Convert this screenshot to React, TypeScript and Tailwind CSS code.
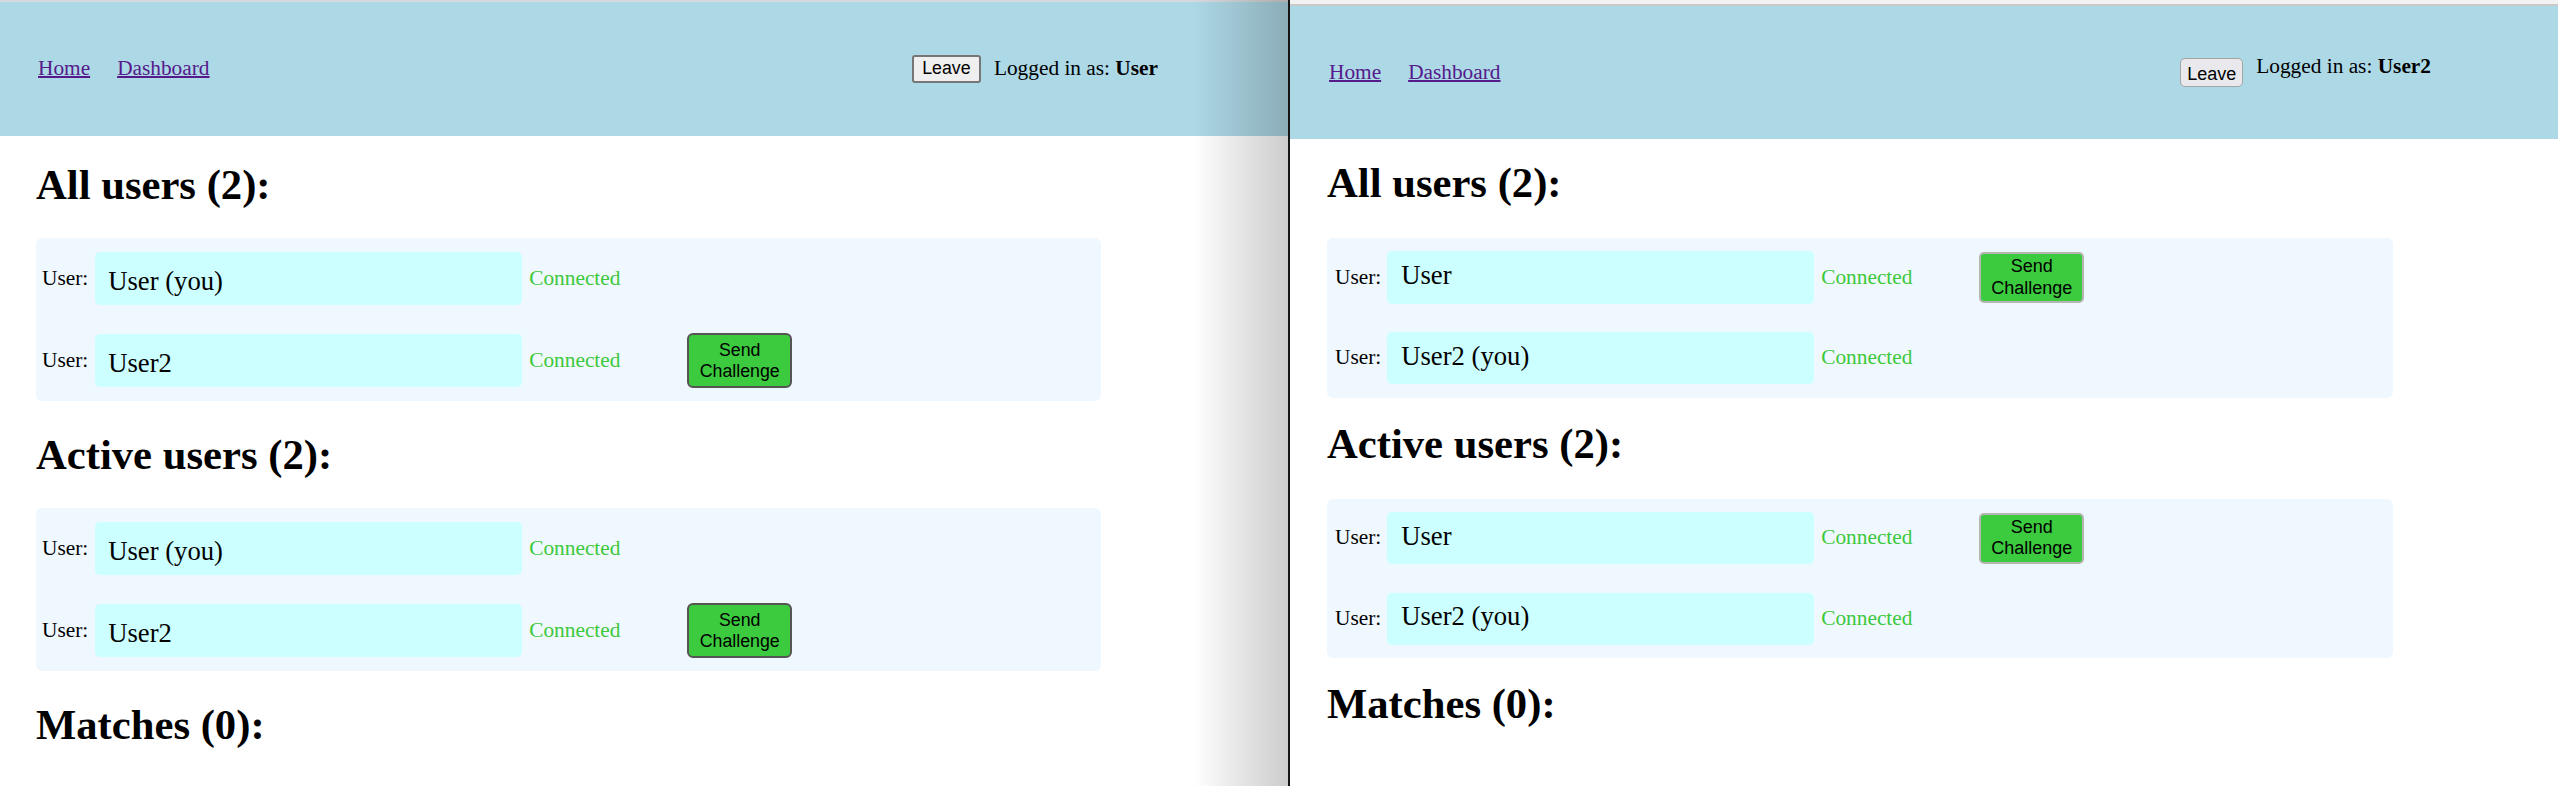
import React from 'react';

type Member = { name: string; you: boolean };

const firstView: Member[] = [
  { name: 'User', you: true },
  { name: 'User2', you: false },
];
const secondView: Member[] = [
  { name: 'User', you: false },
  { name: 'User2', you: true },
];

function UserRow({ member, alt }: { member: Member; alt: boolean }) {
  return (
    <div className={alt ? 'flex items-center h-[53px] pl-[8px]' : 'flex items-center h-[55px] pl-[6px]'}>
      <span className={alt ? 'mr-[6px]' : 'mr-[7px]'}>User:</span>
      <div
        className={
          alt
            ? 'w-[427px] h-[52.5px] rounded-[5px] bg-[#ccffff] pl-[14px] pb-[5px] flex items-center text-[26.67px]'
            : 'w-[427px] h-[53.5px] rounded-[5px] bg-[#ccffff] pl-[13px] pt-[5px] flex items-center text-[26.67px]'
        }
      >
        {member.name}
        {member.you ? ' (you)' : ''}
      </div>
      <span className="ml-[7px] w-[158px] text-[#3cc83c]">Connected</span>
      {!member.you && (
        <button
          className={
            alt
              ? "w-[105px] h-[51px] border-2 border-[#b5b5b5] rounded-[5px] bg-[#3ccb3e] font-['Liberation_Sans',Arial,sans-serif] text-[18px] leading-[21.6px] text-black"
              : "w-[105px] h-[55px] border-2 border-[#555555] rounded-[6px] bg-[#3ccb3e] font-['Liberation_Sans',Arial,sans-serif] text-[17.78px] leading-[20.4px] text-black"
          }
        >
          Send
          <br />
          Challenge
        </button>
      )}
    </div>
  );
}

function UserList({ title, members, alt, first }: { title: string; members: Member[]; alt: boolean; first?: boolean }) {
  const headingClass = alt
    ? first
      ? 'text-[42.67px] leading-[49px] font-bold mt-[19px] mb-[31px]'
      : 'text-[42.67px] leading-[49px] font-bold mt-[21px] mb-[31px]'
    : first
      ? 'text-[42.67px] leading-[49px] font-bold mt-[24px] mb-[29px]'
      : 'text-[42.67px] leading-[49px] font-bold mt-[29px] mb-[29px]';
  return (
    <section>
      <h1 className={headingClass}>{title}</h1>
      <div
        className={
          alt
            ? 'w-[1066px] rounded-[6px] bg-[#f0f8ff] py-[13px] flex flex-col gap-[27.7px]'
            : 'w-[1065px] rounded-[6px] bg-[#f0f8ff] py-[13px] flex flex-col gap-[27px]'
        }
      >
        {members.map((m) => (
          <UserRow key={m.name} member={m} alt={alt} />
        ))}
      </div>
    </section>
  );
}

function BrowserView({ me, members, alt }: { me: string; members: Member[]; alt: boolean }) {
  return (
    <div className={alt ? 'relative w-[1268px] h-[786px] bg-white overflow-hidden' : 'relative w-[1288px] h-[786px] bg-white overflow-hidden'}>
      {alt ? (
        <>
          <div className="h-[4px] bg-[#f2f2f2]" />
          <div className="h-[2px] bg-[#c9c9c9]" />
        </>
      ) : (
        <div className="h-[2px] bg-[#d6d9db]" />
      )}
      <header
        className={
          alt
            ? 'h-[133px] bg-[#add8e6] flex items-center justify-between pl-[39px] pr-[127px]'
            : 'h-[134px] bg-[#add8e6] flex items-center justify-between pl-[38px] pr-[130px]'
        }
      >
        <nav className="flex gap-[27px]">
          <a href="#" className="text-[#551a8b] underline decoration-[2px]">Home</a>
          <a href="#" className="text-[#551a8b] underline decoration-[2px]">Dashboard</a>
        </nav>
        <div className={alt ? 'flex items-start gap-[13px]' : 'flex items-center gap-[13px]'}>
          <button
            className={
              alt
                ? "w-[63px] h-[29px] pt-[3px] border border-[#a5a5a5] rounded-[5px] bg-[#e9e9ed] font-['Liberation_Sans',Arial,sans-serif] text-[18px] leading-none text-black"
                : "w-[69px] h-[28px] border-2 border-[#767676] rounded-[3px] bg-[#efefef] font-['Liberation_Sans',Arial,sans-serif] text-[17.78px] leading-none text-black"
            }
          >
            Leave
          </button>
          <span className={alt ? 'leading-[24.5px] -mt-[4px]' : ''}>
            Logged in as: <b>{me}</b>
          </span>
        </div>
      </header>
      <main className={alt ? 'pl-[37px]' : 'pl-[36px]'}>
        <UserList title="All users (2):" members={members} alt={alt} first />
        <UserList title="Active users (2):" members={members} alt={alt} />
        <h1
          className={
            alt
              ? 'text-[42.67px] leading-[49px] font-bold mt-[21px]'
              : 'text-[42.67px] leading-[49px] font-bold mt-[29px]'
          }
        >
          Matches (0):
        </h1>
      </main>
      {!alt && (
        <div className="absolute right-0 top-0 h-full w-[95px] bg-linear-to-r from-transparent to-black/20 pointer-events-none" />
      )}
    </div>
  );
}

export default function App() {
  return (
    <div className="flex w-[2558px] h-[786px] overflow-hidden bg-white text-black font-['Liberation_Serif','Times_New_Roman',serif] text-[21.33px]">
      <BrowserView me="User" members={firstView} alt={false} />
      <div className="w-[2px] bg-[#141414]" />
      <BrowserView me="User2" members={secondView} alt />
    </div>
  );
}
